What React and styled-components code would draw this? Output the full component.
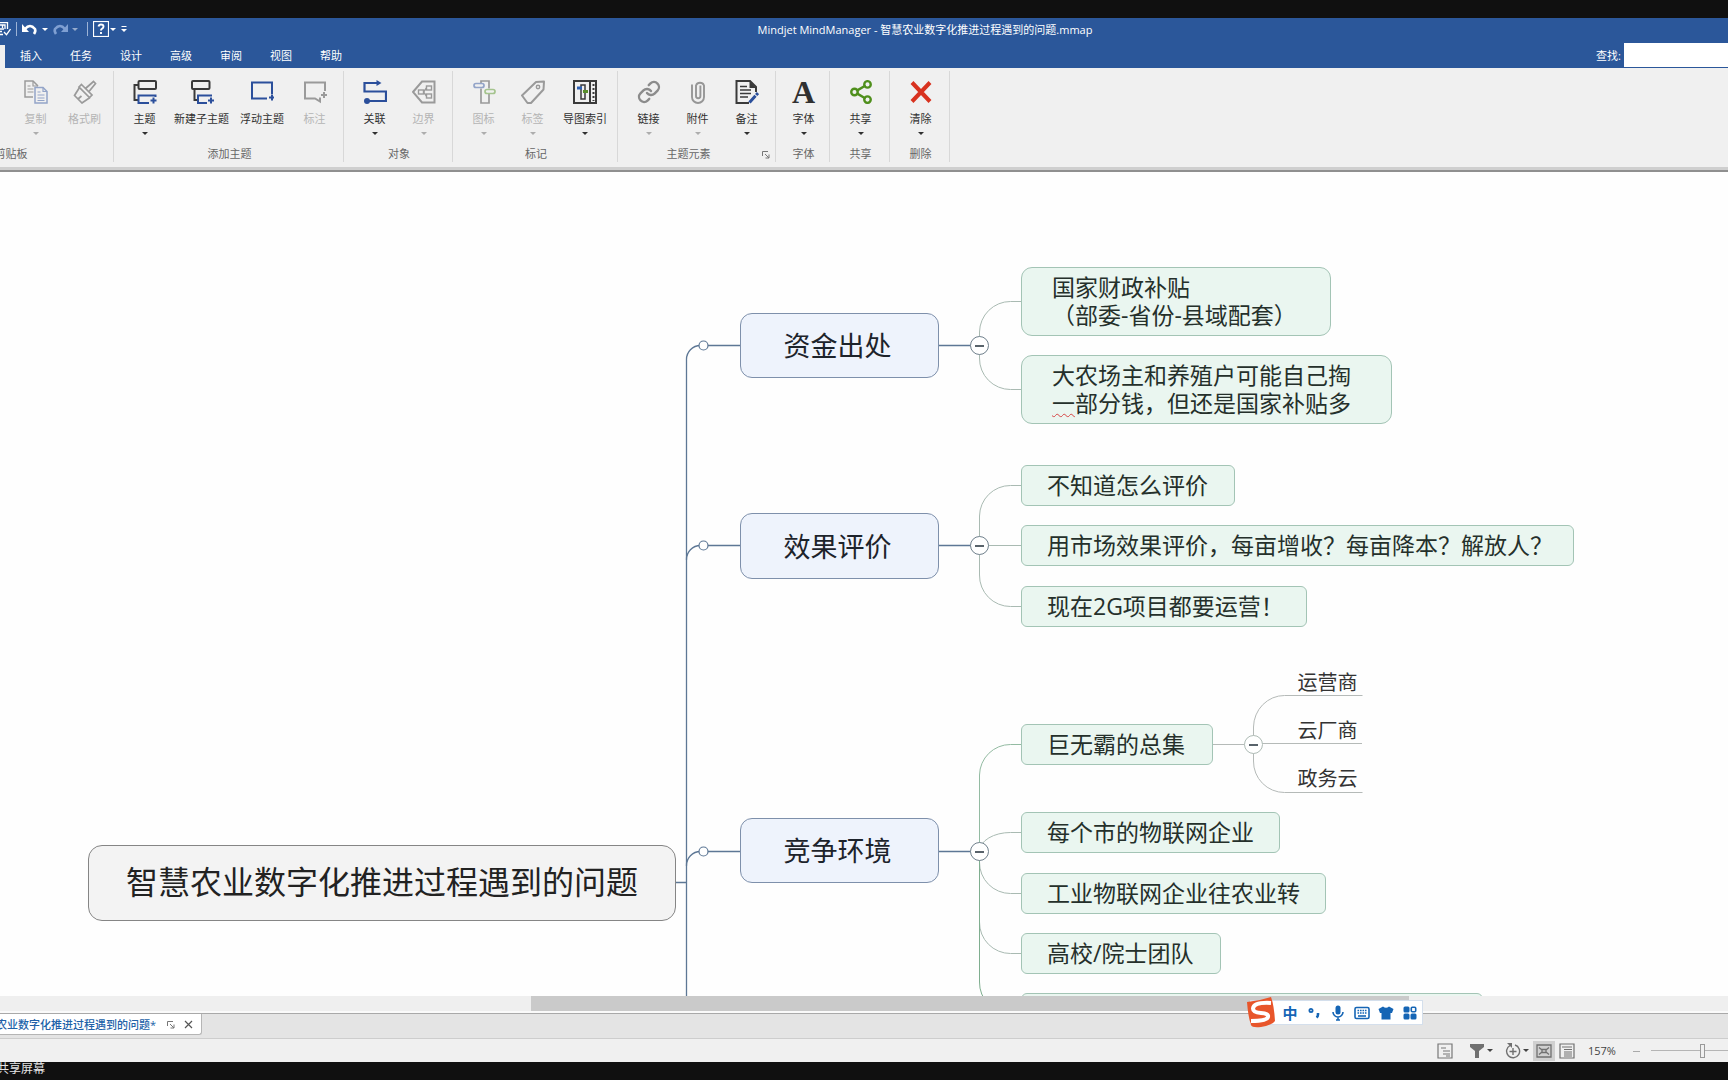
import React from "react"
import styled, { createGlobalStyle, css } from 'styled-components'
import { Link, Share2 } from 'lucide-react'

const GlobalStyle = createGlobalStyle`
  * {
    box-sizing: border-box;
  }
  body {
    margin: 0;
    background: #fff;
    font-family: 'Open Sans', 'Noto Sans CJK SC', sans-serif;
    font-size: 11px;
    color: #333;
  }
  button, input {
    font-family: inherit;
    font-size: inherit;
  }
`

// Window
export const Window = styled.div`
  display: flex;
  flex-direction: column;
  width: 100%;
  height: 100vh;
  overflow: hidden;
  background: #fff;
`

export const ScreenEdge = styled.div`
  flex: none;
  height: 18px;
  background: #101010;
  color: #e4e4e4;
  font-size: 12px;
  line-height: 14px;
  white-space: nowrap;
`

export const SharingLabel = styled.span`
  display: inline-block;
  margin-left: -3px;
`

export const PlainButton = styled.button`
  display: flex;
  align-items: center;
  justify-content: center;
  border: none;
  padding: 0;
  background: none;
  color: inherit;
  cursor: pointer;
`

// Title bar
export const Header = styled.header`
  flex: none;
  background: #2b579a;
  color: #fff;
`

export const TitleBar = styled.div`
  display: grid;
  grid-template-columns: 1fr auto 1fr;
  align-items: center;
  height: 24px;
`

export const WindowTitle = styled.h1`
  margin: 0;
  padding-left: 122px;
  font-size: 11px;
  font-weight: 400;
  line-height: 16px;
  white-space: nowrap;
`

export const QuickAccess = styled.div`
  display: flex;
  align-items: center;
  height: 20px;
  padding-bottom: 2px;
`

export const QuickSeparator = styled.span`
  width: 1px;
  height: 14px;
  margin: 0 5px;
  background: #9db3d6;
`

export const Caret = styled.span`
  width: 0;
  height: 0;
  border: 3px solid transparent;
  border-top-color: currentColor;
  border-bottom: none;
`

export const CaretButton = styled(PlainButton)`
  width: ${({ $wide }) => ($wide ? '14px' : '8px')};
  height: 16px;
  opacity: ${({ disabled }) => (disabled ? 0.5 : 1)};
`

export const SaveButton = styled(PlainButton)`
  margin-left: -3px;
`

export const MenuBar = styled.nav`
  display: flex;
  align-items: flex-end;
  height: 26px;
`

export const ActiveTab = styled.span`
  width: 5px;
  height: 23px;
  background: #f0f0f0;
`

export const MenuTab = styled(PlainButton)`
  width: 50px;
  height: 24px;
  padding: 0 0 2px 2px;
`

export const MenuTabs = styled.div`
  display: flex;
  flex: 1;
`

export const SearchBox = styled.label`
  display: flex;
  align-items: center;
  gap: 3px;
  height: 26px;
`

export const SearchInput = styled.input`
  width: 104px;
  height: 24px;
  border: none;
  background: #fff;
`

// Ribbon
export const Ribbon = styled.div`
  display: flex;
  flex: none;
  height: 104px;
  padding: 3px 0 8px;
  background: #f0f0f0;
  border-bottom: 2px solid #8f8f8f;
  box-shadow: inset 0 -3px 0 #cfcfcf;
`

export const Group = styled.section`
  display: flex;
  flex-direction: column;
  flex: none;
  position: relative;
  padding: 0 4px 0 6px;
  border-right: 1px solid #d8d8d8;
  ${({ $scrolled }) => $scrolled && css`
    width: 207px;
    margin-left: -93px;
    align-items: flex-end;
  `}
`

export const GroupItems = styled.div`
  display: flex;
  height: 74px;
`

export const GroupLabel = styled.div`
  align-self: center;
  padding-top: 1px;
  padding-right: ${({ $launcher }) => ($launcher ? '18px' : '0')};
  color: #666;
  line-height: 16px;
`

export const Tool = styled.button`
  display: flex;
  flex-direction: column;
  align-items: center;
  width: ${({ $w }) => $w || 49}px;
  border: none;
  padding: 9px 0 0;
  background: none;
  color: #303030;
  line-height: 16px;
  white-space: nowrap;
  cursor: pointer;
`

export const ToolLabel = styled.span`
  margin: 7px 0 5px;
  color: ${({ $off }) => ($off ? '#b4b4b4' : 'inherit')};
`

export const ToolCaret = styled(Caret)`
  opacity: ${({ $dim }) => ($dim ? 0.35 : 1)};
`

export const Launcher = styled(PlainButton)`
  position: absolute;
  right: 5px;
  bottom: 3px;
`

export const FontGlyph = styled.span`
  height: 24px;
  font: 700 32px/24px 'Liberation Serif', serif;
`

// Map
export const Canvas = styled.main`
  position: relative;
  flex: 1;
  min-height: 0;
  overflow: hidden;
  background: #fefefe;
`

export const Wires = styled.svg`
  position: absolute;
  inset: 0;
  width: 100%;
  height: 100%;
  fill: none;
`

const topicKinds = {
  root: css`
    padding-left: 37px;
    border-color: #858585;
    border-radius: 14px;
    background: #f3f3f3;
    color: #222;
    font-size: 32px;
    line-height: 40px;
  `,
  main: css`
    justify-content: center;
    padding-right: 4px;
    border-color: #7e90ab;
    border-radius: 12px;
    background: #eef3fc;
    color: #1d232b;
    font-size: 27px;
  `,
  sub: css`
    padding-left: ${({ $lines }) => ($lines ? 30 : 25)}px;
    border-color: #a3c4b5;
    border-radius: ${({ $lines }) => ($lines ? 11 : 6)}px;
    background: #eaf6f0;
    color: #25302b;
    font-size: 23px;
    line-height: 28px;
  `,
  text: css`
    justify-content: center;
    padding-right: 2px;
    border-color: transparent;
    color: #333;
    font-size: 20px;
  `,
}

export const Topic = styled.div`
  position: absolute;
  display: flex;
  align-items: center;
  left: ${({ $x }) => $x}px;
  top: ${({ $y }) => $y}px;
  width: ${({ $w }) => $w}px;
  height: ${({ $h }) => $h}px;
  padding-bottom: 2px;
  border: 1px solid;
  white-space: pre;
  ${({ $kind }) => topicKinds[$kind]}
`

export const Misspelled = styled.span`
  text-decoration: underline wavy #d64545 1px;
  text-underline-offset: 1px;
`

export const Expander = styled.button`
  position: absolute;
  left: ${({ $x }) => $x - 10}px;
  top: ${({ $y }) => $y - 9}px;
  display: flex;
  align-items: center;
  justify-content: center;
  width: 19px;
  height: 19px;
  padding: 0;
  border: 1px solid ${({ $light }) => ($light ? '#aebbb5' : '#70808c')};
  border-radius: 50%;
  background: #fff;
  &::after {
    content: '';
    width: 9px;
    height: 2px;
    background: #59636b;
  }
`

// Bottom bars
export const ScrollTrack = styled.div`
  flex: none;
  height: 18px;
  padding-left: 531px;
  background: #efefef;
  border-bottom: 1px solid #a9a9a9;
  box-shadow: inset 0 -2px 0 #fafafa;
`

export const ScrollThumb = styled.div`
  width: 878px;
  height: 15px;
  background: #cacaca;
`

export const DocumentBar = styled.div`
  flex: none;
  height: 25px;
  background: #e4e4e4;
  border-bottom: 1px solid #cdcdcd;
`

export const DocumentTab = styled.div`
  display: flex;
  align-items: center;
  width: 229px;
  height: 21px;
  margin-left: -27px;
  border: 1px solid #b5b5b5;
  border-top: none;
  border-radius: 0 0 3px 3px;
  background: #fff;
  color: #2061a8;
  white-space: nowrap;
`

export const DocumentName = styled.span`
  width: 195px;
  font-weight: 500;
`

export const TabButton = styled(PlainButton)`
  width: 10px;
  margin-right: 8px;
`

export const StatusBar = styled.footer`
  display: flex;
  flex: none;
  align-items: center;
  justify-content: flex-end;
  height: 23px;
  margin-right: -26px;
  background: #f0f0f0;
  color: #444;
`

export const StatusButton = styled(PlainButton)`
  gap: 2px;
  width: ${({ $w }) => $w}px;
  height: 20px;
  background: ${({ $on }) => ($on ? '#d0d0d0' : 'none')};
`

export const Zoom = styled.span`
  width: 54px;
  padding-left: 9px;
`

export const ZoomSlider = styled.input`
  appearance: none;
  width: 103px;
  height: 16px;
  margin: 0 0 0 10px;
  background: linear-gradient(#b5b5b5, #b5b5b5) center / 100% 1px no-repeat;
  &::-webkit-slider-thumb {
    appearance: none;
    width: 5px;
    height: 14px;
    border: 1px solid #999;
    background: #f0f0f0;
  }
`

// Input method bar, floats above the window
export const ImeBar = styled.div`
  position: fixed;
  right: 305px;
  bottom: 55px;
  display: flex;
  align-items: center;
  height: 25px;
  border: 1px solid #d4dfec;
  border-left: none;
  background: #fff;
  color: #1565b5;
`

export const ImeLogo = styled.svg`
  width: 34px;
  height: 34px;
  margin-left: -6px;
`

export const ImeButton = styled(PlainButton)`
  width: 24px;
  height: 22px;
  font-size: 15px;
  font-weight: 700;
`

const Icon = ({ size = 24, children, ...rest }) => (
  <svg width={size} height={size} viewBox={`0 0 ${size} ${size}`} fill="none" stroke="#3a3a3a" strokeWidth="2" aria-hidden="true" {...rest}>
    {children}
  </svg>
)

const BLUE = '#2b4f9b'

const CopyIcon = () => (
  <Icon stroke="#9a9a9a" strokeWidth="1.5">
    <path d="M9 17H1V1h8l5 5" />
    <path d="M9 1v5h5M3.500 6h3M3.500 9h6M3.500 12h6" strokeWidth="1.200" />
    <path d="M11 7.500h8l4 4V23H11z" stroke="#93a4c8" fill="#f0f0f0" />
    <path d="M19 7.500v4h4M13.500 12h3M13.500 15h7M13.500 18h7M13.500 20.500h7" stroke="#93a4c8" strokeWidth="1.200" />
  </Icon>
)

const BrushIcon = () => (
  <Icon stroke="#9a9a9a" strokeWidth="1.700">
    <path d="M8.500 4.500l10.500 10.500-2.500 2.500L6 7z" />
    <path d="M6.500 7.500L1.500 15.500l7.500 7.500 8-5.500M5 19l3.500-3M12.500 8.500l8-7 2 2-6.500 8" />
  </Icon>
)

const TopicIcon = () => (
  <Icon>
    <rect x="5.500" y="1" width="17.500" height="8" rx="1" />
    <path d="M5.500 5H1.500v15H5" />
    <path d="M22.500 17v-1.500h-17v7.500H16M20.500 17.500v6M17.500 20.500h6" stroke={BLUE} />
  </Icon>
)

const SubtopicIcon = () => (
  <Icon>
    <rect x="2" y="1" width="17.500" height="8" rx="1" />
    <path d="M4.500 9v11H8" />
    <path d="M21 16.500v-1H8V23h9M21 17.500v6M18 20.500h6" stroke={BLUE} />
  </Icon>
)

const FloatingIcon = () => (
  <Icon stroke={BLUE}>
    <path d="M17 18.500H2V2.500h20V14M22 14.500v6M19 17.500h5" />
  </Icon>
)

const CalloutIcon = () => (
  <Icon stroke="#9a9a9a">
    <path d="M22 11V2.500H2v16h10l5 3v-4M21 12v6M18 15h6" />
  </Icon>
)

const RelationIcon = () => (
  <Icon stroke={BLUE} strokeWidth="2.200">
    <path d="M15 3H1.500v8.500h21.500V21H5" />
    <path d="M13.500 0l5 3-5 3z" fill={BLUE} stroke="none" />
    <circle cx="4" cy="21" r="3" fill={BLUE} stroke="none" />
  </Icon>
)

const BoundaryIcon = () => (
  <Icon stroke="#9a9a9a">
    <path d="M1 12L10 1.500h12.500v21H10z" />
    <rect x="6.500" y="10" width="5" height="4" strokeWidth="1.400" />
    <rect x="14.500" y="6" width="5" height="4" strokeWidth="1.400" />
    <rect x="14.500" y="14" width="5" height="4" strokeWidth="1.400" />
    <path d="M11.500 12l3-4M11.500 12l3 4" strokeWidth="1.400" />
  </Icon>
)

const MarkerIcon = () => (
  <Icon stroke="#9a9a9a" strokeWidth="1.700">
    <path d="M9 3.500V1h8v7.500M9 8.500V23h8v-9.500" />
    <rect x="2" y="3.500" width="10" height="4" rx="2" stroke="#93a4c8" />
    <rect x="13" y="9.500" width="10" height="4" rx="2" stroke="#a5c48e" />
  </Icon>
)

const TagIcon = () => (
  <Icon stroke="#9a9a9a">
    <path d="M1 15.500L15 2l8-.500-.500 8L10 23H6.500z" strokeLinejoin="round" />
    <circle cx="17" cy="7" r="1.700" strokeWidth="1.400" />
  </Icon>
)

const IndexIcon = () => (
  <Icon>
    <rect x="1" y="1" width="22" height="22" />
    <path d="M17 1v22" />
    <path d="M20.500 4v17" strokeDasharray="2 2" />
    <path d="M8 5h4v14H8z" strokeWidth="1.500" />
    <path d="M4 8h5" stroke="#2f61b5" strokeWidth="3" />
    <path d="M10 11.500h5" stroke="#5a8f2c" strokeWidth="3" />
  </Icon>
)

const ClipIcon = () => (
  <Icon stroke="#969696" strokeWidth="1.900">
    <path d="M6 4.500v12.500a6 6 0 0 0 12 0V5.500a4.300 4.300 0 0 0-8 0V16a2.200 2.200 0 0 0 4.400 0V5.500" />
  </Icon>
)

const NoteIcon = () => (
  <Icon>
    <path d="M14 23H1.500V1H15l6 6v5" />
    <path d="M14.500 1v7H21z" fill="#3a3a3a" stroke="none" />
    <path d="M5 6.500h7M5 10h11M5 13.500h11M5 17h8" strokeWidth="1.400" />
    <path d="M14.500 22.500l8.500-9.500" stroke={BLUE} strokeWidth="3" strokeDasharray="9 1" />
  </Icon>
)

const ClearIcon = () => (
  <Icon stroke="#d8321f" strokeWidth="4">
    <path d="M3 2.500l18 19M21 2.500l-18 19" />
  </Icon>
)

const LauncherIcon = () => (
  <Icon size={9} stroke="#777" strokeWidth="1">
    <path d="M1.500 6V1.500H7M4 4l4 4M8 4.500V8H4.500" />
  </Icon>
)

const groups = [
  {
    label: '剪贴板', scrolled: true, tools: [
      { label: '复制', icon: <CopyIcon />, caret: true, off: true },
      { label: '格式刷', icon: <BrushIcon />, off: true },
    ],
  },
  {
    label: '添加主题', tools: [
      { label: '主题', icon: <TopicIcon />, caret: true },
      { label: '新建子主题', icon: <SubtopicIcon />, w: 65 },
      { label: '浮动主题', icon: <FloatingIcon />, w: 56 },
      { label: '标注', icon: <CalloutIcon />, off: true },
    ],
  },
  {
    label: '对象', tools: [
      { label: '关联', icon: <RelationIcon />, caret: true },
      { label: '边界', icon: <BoundaryIcon />, caret: true, off: true },
    ],
  },
  {
    label: '标记', tools: [
      { label: '图标', icon: <MarkerIcon />, caret: true, off: true },
      { label: '标签', icon: <TagIcon />, caret: true, off: true },
      { label: '导图索引', icon: <IndexIcon />, caret: true, w: 56 },
    ],
  },
  {
    label: '主题元素', launcher: true, tools: [
      { label: '链接', icon: <Link size={24} color="#8c8c8c" strokeWidth={2.4} />, caret: true, dimCaret: true },
      { label: '附件', icon: <ClipIcon />, caret: true, dimCaret: true },
      { label: '备注', icon: <NoteIcon />, caret: true },
    ],
  },
  { label: '字体', tools: [{ label: '字体', icon: <FontGlyph>A</FontGlyph>, caret: true, w: 43 }] },
  { label: '共享', tools: [{ label: '共享', icon: <Share2 size={26} color="#4f8f1c" strokeWidth={2.2} viewBox="0 1 24 22" height={24} />, caret: true }] },
  { label: '删除', tools: [{ label: '清除', icon: <ClearIcon />, caret: true }] },
]

const topics = [
  { kind: 'root', x: 88, y: 673, w: 588, h: 76, text: '智慧农业数字化推进过程遇到的问题' },
  { kind: 'main', x: 740, y: 141, w: 199, h: 65, text: '资金出处' },
  { kind: 'main', x: 740, y: 341, w: 199, h: 66, text: '效果评价' },
  { kind: 'main', x: 740, y: 646, w: 199, h: 65, text: '竞争环境' },
  { kind: 'sub', lines: true, x: 1021, y: 95, w: 310, h: 69, text: '国家财政补贴\n（部委-省份-县域配套）' },
  { kind: 'sub', lines: true, x: 1021, y: 183, w: 371, h: 69, text: <span>大农场主和养殖户可能自己掏{'\n'}<Misspelled>一</Misspelled>部分钱，但还是国家补贴多</span> },
  { kind: 'sub', x: 1021, y: 293, w: 214, h: 41, text: '不知道怎么评价' },
  { kind: 'sub', x: 1021, y: 353, w: 553, h: 41, text: '用市场效果评价，每亩增收？每亩降本？解放人？' },
  { kind: 'sub', x: 1021, y: 414, w: 286, h: 41, text: '现在2G项目都要运营！' },
  { kind: 'sub', x: 1021, y: 552, w: 192, h: 41, text: '巨无霸的总集' },
  { kind: 'sub', x: 1021, y: 640, w: 259, h: 41, text: '每个市的物联网企业' },
  { kind: 'sub', x: 1021, y: 701, w: 305, h: 41, text: '工业物联网企业往农业转' },
  { kind: 'sub', x: 1021, y: 761, w: 200, h: 41, text: '高校/院士团队' },
  { kind: 'sub', x: 1021, y: 821, w: 462, h: 41, text: '' },
  { kind: 'text', x: 1294, y: 497, w: 69, h: 26, text: '运营商' },
  { kind: 'text', x: 1294, y: 545, w: 69, h: 26, text: '云厂商' },
  { kind: 'text', x: 1294, y: 593, w: 69, h: 26, text: '政务云' },
]

const MapWires = () => (
  <Wires>
    <g stroke="#a9bab2">
      <path d="M979.500 173V160a31 31 0 0 1 31-30.500H1021M979.500 173v13a31 31 0 0 0 31 31.500H1021" />
      <path d="M979.500 374V344a31 31 0 0 1 31-30.500H1021M979.500 374v29a31 31 0 0 0 31 31.500H1021M980 373.500h41" />
      <path d="M979.500 679V603a31 31 0 0 1 31-30.500H1021" stroke="#93bba2" />
      <path d="M979.500 679a31 19 0 0 1 31-18.500H1021M979.500 679v11a31 31 0 0 0 31 31.500H1021M979.500 750a31 31 0 0 0 31 31.500H1021" />
      <path d="M979.500 679v131a31 31 0 0 0 31 31.500H1021" stroke="#7fae8f" />
      <path d="M1213 572.500h41M1253.500 572v-17a31 32 0 0 1 31-31.500h78M1254 571.500h108M1253.500 572v17a31 31 0 0 0 31 31.500h78" stroke="#b5bab8" />
    </g>
    <g stroke="#5d7795" strokeWidth="1.300">
      <path d="M686.500 830V188a14 14 0 0 1 14-14.500H740M676 710.500h11M939 173.500h41M939 373.500h41M939 679.500h41" />
      <path d="M686.500 388a14 14 0 0 1 14-14.500H740M686.500 694a14 14 0 0 1 14-14.500H740" />
      <g fill="#fff" strokeWidth="1.200">
        <circle cx="703.500" cy="173.500" r="4.500" />
        <circle cx="703.500" cy="373.500" r="4.500" />
        <circle cx="703.500" cy="679.500" r="4.500" />
      </g>
    </g>
  </Wires>
)

const ImeIcons = () => (
  <>
    <ImeButton aria-label="标点">
      <Icon size={16} stroke="#1565b5" strokeWidth="1.800">
        <circle cx="5" cy="5.500" r="1.600" />
        <path d="M12 8v1.500q0 2-1.500 3" strokeWidth="2.600" />
      </Icon>
    </ImeButton>
    <ImeButton aria-label="语音">
      <Icon size={16} stroke="#1565b5">
        <rect x="5.500" y="0.500" width="5" height="9" rx="2.500" fill="#1565b5" stroke="none" />
        <path d="M3 7a5 5 0 0 0 10 0M8 12v3.500M6 15h4" strokeWidth="1.600" />
      </Icon>
    </ImeButton>
    <ImeButton aria-label="键盘">
      <Icon size={16} stroke="#1565b5" strokeWidth="1.600">
        <rect x="1" y="2.500" width="14" height="11" rx="1.500" />
        <path d="M3.500 5.500h9M3.500 8h9" strokeDasharray="1.600 .9" />
        <path d="M4 11h8" />
      </Icon>
    </ImeButton>
    <ImeButton aria-label="皮肤">
      <Icon size={16} stroke="none">
        <path d="M5 1.500q3 2.500 6 0l4.500 2.500-1.500 4h-1.500v6.500h-9V8H2L.500 4z" fill="#1565b5" />
      </Icon>
    </ImeButton>
    <ImeButton aria-label="工具箱">
      <Icon size={16} stroke="none">
        <rect x="1.500" y="1.500" width="6" height="6" rx="1.500" fill="#1565b5" />
        <rect x="1.500" y="8.500" width="6" height="6" rx="1.500" fill="#1565b5" />
        <rect x="8.500" y="8.500" width="6" height="6" rx="1.500" fill="#1565b5" />
        <rect x="9.300" y="2.300" width="4.400" height="4.400" rx="1" stroke="#1565b5" strokeWidth="1.600" />
      </Icon>
    </ImeButton>
  </>
)

export const App = () => {
  return (
    <>
      <GlobalStyle />
      <Window>
        <ScreenEdge />
        <Header>
          <TitleBar>
            <QuickAccess>
              <SaveButton aria-label="保存">
                <Icon size={14} stroke="#fff" strokeWidth="1.300">
                  <path d="M1 .700h9.500V7M3 3h5v4M5.500 3v3M1 7h6M1 9.500h4M1 12.500h5M7 10l2.500 2.700L13.500 7" />
                </Icon>
              </SaveButton>
              <QuickSeparator />
              <PlainButton aria-label="撤消">
                <Icon size={16} stroke="#fff" strokeWidth="2.600">
                  <path d="M3 8q5-6 10 0 1 2-1 5" />
                  <path d="M0 3v8h7z" fill="#fff" stroke="none" />
                </Icon>
              </PlainButton>
              <CaretButton $wide aria-label="撤消列表"><Caret /></CaretButton>
              <PlainButton disabled aria-label="恢复">
                <Icon size={16} stroke="#7f9fd2" strokeWidth="2.600">
                  <path d="M13 8q-5-6-10 0-1 2 1 5" />
                  <path d="M16 3v8H9z" fill="#7f9fd2" stroke="none" />
                </Icon>
              </PlainButton>
              <CaretButton disabled $wide aria-label="恢复列表"><Caret /></CaretButton>
              <QuickSeparator />
              <PlainButton aria-label="帮助">
                <Icon size={16} stroke="#fff" strokeWidth="1.200">
                  <rect x="0.500" y="0.500" width="15" height="15" />
                  <path d="M5.500 5.500q.5-2 2.500-2 2.500 0 2.500 2 0 1.300-1.500 2.200-1 .6-1 1.800M8 11v2" strokeWidth="1.900" />
                </Icon>
              </PlainButton>
              <CaretButton aria-label="帮助列表"><Caret /></CaretButton>
              <CaretButton $wide aria-label="自定义">
                <Icon size={8} stroke="#fff" strokeWidth="1">
                  <path d="M1.500 1.500h5" />
                  <path d="M1 4h6L4 7z" fill="#fff" stroke="none" />
                </Icon>
              </CaretButton>
            </QuickAccess>
            <WindowTitle>Mindjet MindManager - 智慧农业数字化推进过程遇到的问题.mmap</WindowTitle>
          </TitleBar>
          <MenuBar>
            <ActiveTab />
            <MenuTabs>
              {['插入', '任务', '设计', '高级', '审阅', '视图', '帮助'].map((name) => (
                <MenuTab key={name}>{name}</MenuTab>
              ))}
            </MenuTabs>
            <SearchBox>
              查找:
              <SearchInput type="text" />
            </SearchBox>
          </MenuBar>
        </Header>

        <Ribbon>
          {groups.map((group) => (
            <Group key={group.label} $scrolled={group.scrolled}>
              <GroupItems>
                {group.tools.map((tool) => (
                  <Tool key={tool.label} $w={tool.w}>
                    {tool.icon}
                    <ToolLabel $off={tool.off}>{tool.label}</ToolLabel>
                    {tool.caret && <ToolCaret $dim={tool.off || tool.dimCaret} />}
                  </Tool>
                ))}
              </GroupItems>
              <GroupLabel $launcher={group.launcher}>{group.label}</GroupLabel>
              {group.launcher && <Launcher aria-label="更多"><LauncherIcon /></Launcher>}
            </Group>
          ))}
        </Ribbon>

        <Canvas>
          <MapWires />
          {topics.map((t) => (
            <Topic key={t.y + '-' + t.x} $kind={t.kind} $lines={t.lines} $x={t.x} $y={t.y} $w={t.w} $h={t.h}>
              {t.text}
            </Topic>
          ))}
          <Expander $x={980} $y={173} aria-label="折叠" />
          <Expander $x={980} $y={373} aria-label="折叠" />
          <Expander $x={980} $y={679} aria-label="折叠" />
          <Expander $light $x={1254} $y={572} aria-label="折叠" />
        </Canvas>

        <ScrollTrack>
          <ScrollThumb />
        </ScrollTrack>
        <DocumentBar>
          <DocumentTab>
            <DocumentName>智慧农业数字化推进过程遇到的问题*</DocumentName>
            <TabButton aria-label="还原"><LauncherIcon /></TabButton>
            <TabButton aria-label="关闭">
              <Icon size={9} stroke="#555" strokeWidth="1.200"><path d="M1 1l7 7M8 1L1 8" /></Icon>
            </TabButton>
          </DocumentTab>
        </DocumentBar>
        <StatusBar>
          <StatusButton $w={31} aria-label="备注">
            <Icon size={16} stroke="#777" strokeWidth="1.200">
              <path d="M1 1h14v14H1zM4 5h5M6 8h7M6 11h7M9 13h4" />
            </Icon>
          </StatusButton>
          <StatusButton $w={41} aria-label="筛选">
            <Icon size={16} stroke="none"><path d="M1 1h14v3l-5 4v7H6V8L1 4z" fill="#707070" /></Icon>
            <Caret />
          </StatusButton>
          <StatusButton $w={32} aria-label="定位">
            <Icon size={16} stroke="#707070" strokeWidth="1.400">
              <path d="M5 2.500a6.500 6.500 0 1 0 5-.500M8 5v7M4.500 8.500h7" />
              <path d="M2 0h5v5z" fill="#707070" stroke="none" />
            </Icon>
            <Caret />
          </StatusButton>
          <StatusButton $w={22} $on aria-label="导图视图">
            <Icon size={16} stroke="#707070" strokeWidth="1.300">
              <path d="M1 2h14v12H1zM6 6.500h4v3H6zM6 7L3 4.500M6 9l-3 2.500M10 7l3-2.500M10 9l3 2.500" />
            </Icon>
          </StatusButton>
          <StatusButton $w={24} aria-label="大纲视图">
            <Icon size={16} stroke="#707070" strokeWidth="1.200">
              <path d="M1 1h14v14H1zM3 4h10M5 6.500h8M5 9h8M5 11h8M5 13h8" />
            </Icon>
          </StatusButton>
          <Zoom>157%</Zoom>
          <PlainButton aria-label="缩小">
            <Icon size={8} stroke="#aaa" strokeWidth="1"><path d="M0 4.500h7" /></Icon>
          </PlainButton>
          <ZoomSlider type="range" aria-label="缩放" defaultValue="50" />
        </StatusBar>
        <ScreenEdge>
          <SharingLabel>共享屏幕</SharingLabel>
        </ScreenEdge>
      </Window>

      <ImeBar>
        <ImeLogo viewBox="0 0 34 34">
          <path d="M3 6Q15 5 27 1q3 8 4 24-3 4-14 6-9 1-10-2Q4 20 3 6z" fill="#e8552a" />
          <path d="M27 7Q10 6 9 12.500q0 4 8 4.500 8 .5 7 4-1 4-17 4" fill="none" stroke="#fff" strokeWidth="4" />
        </ImeLogo>
        <ImeButton aria-label="中文">中</ImeButton>
        <ImeIcons />
      </ImeBar>
    </>
  )
}

export default App
